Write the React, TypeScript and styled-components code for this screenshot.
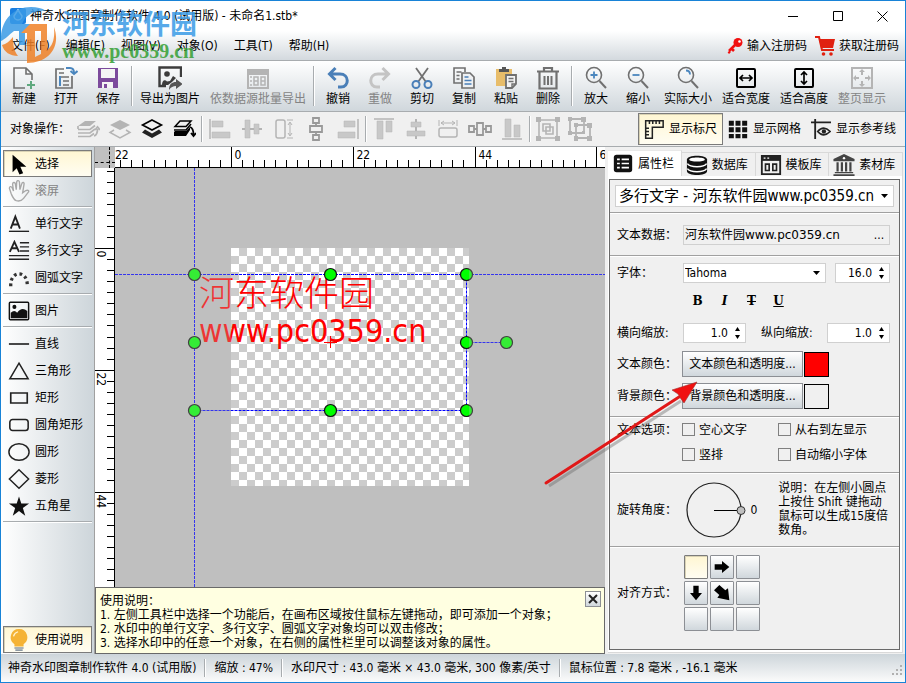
import React, { ReactNode, RefObject, useLayoutEffect, useRef, useState } from "react";
import styled, { createGlobalStyle, css } from "styled-components";

const FONT = '"DejaVu Sans Condensed", "Noto Sans CJK SC", sans-serif';

const GlobalStyle = createGlobalStyle`
  *, *::before, *::after { box-sizing: border-box; }
  body { margin: 0; background: #f0f0f0; }
  body, button, input, select { font-family: ${FONT}; font-size: 12px; line-height: 16px; color: #000; }
  button, input, select { margin: 0; }
  button { padding: 0; border: 0; background: none; white-space: nowrap; }
  svg { display: block; flex: none; }
`;

/* ---------- window frame ---------- */

const Window = styled.div`
  display: flex;
  flex-direction: column;
  min-height: 100vh;
  border: 1px solid #1883d7;
  background: #f0f0f0;
  position: relative;
  overflow: hidden;
`;

const TitleBar = styled.header`
  display: flex;
  align-items: center;
  height: 30px;
  padding-left: 9px;
  background: #fff;
`;

const TitleText = styled.span`
  flex: 1;
  padding-left: 4px;
  white-space: nowrap;
`;

const CaptionButton = styled.button`
  display: flex;
  align-items: center;
  justify-content: center;
  width: 45px;
  height: 30px;
`;

const MenuBar = styled.nav`
  display: flex;
  align-items: center;
  height: 30px;
  padding: 0 6px 0 10px;
  gap: 16px;
  background: linear-gradient(#fff, #d3d9de);
  border-bottom: 1px solid #a8acaf;
`;

const MenuSpacer = styled.span`
  flex: 1;
`;

const RegisterButton = styled.button`
  display: flex;
  align-items: center;
  gap: 4px;
  margin-left: -8px;
`;

/* ---------- toolbars ---------- */

const ToolBar = styled.div`
  display: flex;
  align-items: center;
  height: 51px;
  padding-left: 2px;
  background: linear-gradient(#fff, #d0d7dc);
  border-bottom: 1px solid #a8acaf;
`;

const ToolButton = styled.button`
  display: flex;
  flex-direction: column;
  align-items: center;
  gap: 1px;
  min-width: 42px;
  padding: 0 5px;
  &:disabled { color: #848484; }
`;

const VSeparator = styled.span<{ $h: number; $gap: number }>`
  width: 2px;
  height: ${(p) => p.$h}px;
  margin: 0 ${(p) => p.$gap}px;
  background: #a8acaf;
  border-right: 1px solid #fff;
`;

const ObjectBar = styled.div`
  display: flex;
  align-items: center;
  height: 34px;
  padding: 0 4px 0 9px;
`;

const ObjectLabel = styled.span`
  width: 62px;
  white-space: nowrap;
`;

const ObjectButton = styled.button`
  display: flex;
  justify-content: center;
  width: 32px;
`;

const ObjectSpacer = styled.span`
  flex: 1;
`;

const pressed = css`
  border: 1px solid #7b7b7b;
  background: linear-gradient(#fff6d2, #fffdf2);
  box-shadow: inset 1px 1px 0 #d9d2b4;
`;

const ViewToggle = styled.button<{ $on?: boolean }>`
  display: flex;
  align-items: center;
  gap: 5px;
  height: 32px;
  padding: 0 5px;
  ${(p) => p.$on && pressed}
`;

/* ---------- body ---------- */

const Body = styled.div`
  display: flex;
  flex: 1;
  border-top: 1px solid #a8acaf;
`;

const SideBar = styled.aside`
  display: flex;
  flex-direction: column;
  width: 94px;
  padding: 3px 2px 1px 2px;
  background: linear-gradient(90deg, #fff, #cdd5da);
  border-right: 1px solid #a0a0a0;
`;

const SideButton = styled.button<{ $on?: boolean }>`
  display: flex;
  align-items: center;
  gap: 5px;
  height: 27px;
  padding: 0 4px;
  border: 1px solid transparent;
  &:disabled { color: #848484; }
  ${(p) => p.$on && pressed}
`;

const SideSeparator = styled.span`
  height: 2px;
  margin: 2px 0;
  background: #a8acaf;
  border-bottom: 1px solid #fff;
`;

const SideSpacer = styled.span`
  flex: 1;
`;

const Workspace = styled.main`
  display: grid;
  flex: 1;
  min-width: 0;
  grid-template-columns: 20px minmax(0, 1fr);
  grid-template-rows: 21px 1fr auto;
  background: #c0c0c0;
`;

const RulerCorner = styled.div`
  position: relative;
  &::before, &::after {
    content: "";
    position: absolute;
  }
  &::before { left: 0; right: 0; bottom: 5px; border-top: 1px dashed #000; }
  &::after { top: 0; bottom: 0; right: 5px; border-left: 1px dashed #000; }
`;

const TopRulerCell = styled.div`
  height: 21px;
  background: #fff;
  border-bottom: 1px solid #000;
  overflow: hidden;
`;

const LeftRulerCell = styled.div`
  position: relative;
  background: #fff;
  border-right: 1px solid #000;
  overflow: hidden;
`;

const RulerScale = styled.svg`
  width: 100%;
  height: 100%;
`;

const LeftRulerScale = styled(RulerScale)`
  position: absolute;
  inset: 0;
`;

const Canvas = styled.div`
  position: relative;
  overflow: hidden;
`;

const Artboard = styled.div`
  position: absolute;
  left: 116px;
  top: 80px;
  width: 238px;
  height: 238px;
  background: repeating-conic-gradient(#fff 0 25%, #ccc 0 50%);
  background-size: 16px 16px;
  background-position: 8px 0;
`;

const Veil = styled.div`
  position: absolute;
  left: 116px;
  top: 80px;
  width: 238px;
  height: 238px;
  box-shadow: 0 0 0 2000px rgba(192, 192, 192, 0.28);
`;

const WatermarkText = styled.div`
  position: absolute;
  left: 84px;
  top: 103px;
  color: #f00;
  font-size: 32px;
  line-height: 40px;
  white-space: nowrap;
`;

const WatermarkHan = styled.div`
  font-family: "Noto Sans CJK SC", sans-serif;
  font-size: 35px;
  font-weight: 300;
`;

const Overlay = styled.svg`
  position: absolute;
  inset: 0;
  width: 100%;
  height: 100%;
`;

const HelpBox = styled.section`
  grid-column: 1 / -1;
  display: flex;
  justify-content: space-between;
  align-items: flex-start;
  height: 67px;
  padding: 3px;
  background: #ffffe1;
  border: 1px solid #696969;
`;

const HelpText = styled.div`
  padding: 3px 1px;
  line-height: 14px;
  white-space: nowrap;
`;

const CloseButton = styled.button`
  display: flex;
  align-items: center;
  justify-content: center;
  width: 16px;
  height: 16px;
  border: 1px solid #8c8f94;
  background: linear-gradient(#fff, #d0d7dc);
`;

/* ---------- property panel ---------- */

const Dock = styled.aside`
  display: flex;
  flex-direction: column;
  width: 300px;
  padding: 3px 2px 1px 3px;
`;

const TabRow = styled.div`
  display: flex;
  align-items: flex-end;
`;

const Tab = styled.button<{ $on?: boolean }>`
  display: flex;
  flex: 1;
  align-items: center;
  gap: 4px;
  height: 24px;
  padding-left: 4px;
  border: 1px solid #d9d9d9;
  border-width: 1px 1px 0 0;
  ${(p) => p.$on && css`height: 26px; background: #fff; border-top-color: #e8e8e8;`}
`;

const PanelOuter = styled.div`
  display: flex;
  flex: 1;
  padding: 3px 2px 2px 1px;
  background: #fff;
  border-right: 1px solid #d9d9d9;
  border-bottom: 1px solid #d9d9d9;
`;

const Panel = styled.form`
  flex: 1;
  min-width: 0;
  background: #f0f0f0;
  border: 1px solid #696969;
`;

const Section = styled.div<{ $pad: string; $last?: boolean }>`
  display: flex;
  flex-direction: column;
  padding: ${(p) => p.$pad};
  border-bottom: ${(p) => (p.$last ? "0" : "1px solid #a0a0a0")};
  box-shadow: ${(p) => (p.$last ? "none" : "0 1px 0 #fff")};
`;

const Field = styled.div<{ $h: number }>`
  display: flex;
  align-items: center;
  height: ${(p) => p.$h}px;
  padding-left: 2px;
`;

const Caption = styled.label<{ $w?: number }>`
  flex: none;
  width: ${(p) => p.$w ?? 66}px;
  white-space: nowrap;
`;

const boxed = css`
  border: 1px solid #d0d0d0;
  background: #fff;
`;

const SelectWrap = styled.div<{ $h: number }>`
  ${boxed}
  display: flex;
  align-items: center;
  flex: 1;
  min-width: 0;
  height: ${(p) => p.$h}px;
  padding-right: 5px;
`;

const Select = styled.select<{ $big?: boolean }>`
  flex: 1;
  min-width: 0;
  padding: 0 0 0 ${(p) => (p.$big ? 3 : 1)}px;
  border: 0;
  appearance: none;
  background: transparent;
  font-size: ${(p) => (p.$big ? 15 : 12)}px;
  line-height: 20px;
  white-space: nowrap;
`;

const DataBox = styled.div`
  ${boxed}
  display: flex;
  flex: 1;
  height: 20px;
  background: #f0f0f0;
`;

const DataInput = styled.input`
  flex: 1;
  min-width: 0;
  padding: 0 1px;
  border: 0;
  background: transparent;
  font-family: "DejaVu Sans", "Noto Sans CJK SC", sans-serif;
`;

const MoreButton = styled.button`
  width: 20px;
`;

const SpinBox = styled.div<{ $w: number }>`
  ${boxed}
  display: flex;
  align-items: center;
  width: ${(p) => p.$w}px;
  height: 20px;
`;

const SpinInput = styled.input`
  flex: 1;
  min-width: 0;
  padding: 0 2px 0 0;
  border: 0;
  background: transparent;
  text-align: right;
`;

const SpinButtons = styled.div`
  display: flex;
  flex-direction: column;
  align-items: center;
  gap: 4px;
  width: 15px;
`;

const FormatRow = styled.div`
  display: flex;
  align-items: center;
  height: 35px;
  padding-left: 69px;
`;

const FormatButton = styled.button`
  display: flex;
  justify-content: center;
  width: 27px;
`;

const ColorButton = styled.button`
  width: 121px;
  height: 26px;
  border: 1px solid #8c8f94;
  background: linear-gradient(#fff, #d0d7dc);
`;

const Swatch = styled.button<{ $color: string }>`
  width: 25px;
  height: 25px;
  margin-left: 1px;
  border: 1px solid #000;
  background: ${(p) => p.$color};
`;

const CheckGrid = styled.div`
  display: grid;
  grid-template-columns: 96px 1fr;
  row-gap: 9px;
  margin-left: -1px;
`;

const OptionField = styled.div`
  display: flex;
  padding-left: 2px;
`;

const CheckLabel = styled.label`
  display: flex;
  align-items: flex-start;
  gap: 4px;
  white-space: nowrap;
`;

const CheckBox = styled.input`
  appearance: none;
  width: 13px;
  height: 13px;
  margin-top: 1px;
  border: 1px solid #808080;
`;

const AngleRow = styled.div`
  display: flex;
  align-items: center;
  padding-left: 2px;
`;

const AngleNote = styled.p`
  flex: 1;
  margin: 0 0 0 21px;
  line-height: 14px;
  padding-bottom: 2px;
`;

const AlignGrid = styled.div`
  display: grid;
  grid-template-columns: repeat(3, 24px);
  gap: 2px;
  padding-left: 1px;
`;

const AlignCell = styled.button<{ $on?: boolean }>`
  display: flex;
  align-items: center;
  justify-content: center;
  height: 24px;
  border: 1px solid #8c8f94;
  border-radius: 1px;
  background: linear-gradient(#fff, #d0d7dc);
  ${(p) => p.$on && pressed}
`;

/* ---------- status bar ---------- */

const StatusBar = styled.footer`
  display: flex;
  align-items: center;
  height: 28px;
  padding-left: 7px;
  background: linear-gradient(#cdd5da, #fbfbfb);
  white-space: nowrap;
`;

const StatusSpacer = styled.span`
  flex: 1;
`;

/* ---------- site stamp and pointer arrow, floating over the window ---------- */

const Stamp = styled.div`
  position: absolute;
  left: 0;
  top: 6px;
  display: flex;
  align-items: center;
  gap: 5px;
  pointer-events: none;
  opacity: 0.85;
`;

const StampName = styled.div`
  color: #3a9be6;
  font: bold 27px/32px "Noto Sans CJK SC", sans-serif;
`;

const StampSite = styled.div`
  color: #35a035;
  font: bold 20px/24px "Liberation Serif", serif;
`;

const PointerArrow = styled.svg`
  position: absolute;
  right: 200px;
  top: 376px;
  pointer-events: none;
`;

/* ---------- icons ---------- */

const G = "#707070";
const L = "#b4b4b4";

const Icon = ({ size = 24, children }: { size?: number; children: ReactNode }) => (
  <svg width={size} height={size} viewBox="0 0 24 24" fill="none" aria-hidden="true">{children}</svg>
);

const icons: Record<string, ReactNode> = {
  new: <><path d="M13 22H2V2h12l6 6v6M14 2v6h6" stroke={G} strokeWidth="1.6" /><path d="M19 15v8M15 19h8" stroke="#5fa97f" strokeWidth="2" /></>,
  open: <><path d="M10 3H2v19h16V10" stroke={G} strokeWidth="1.7" /><path d="M5 7h5M5 11h10M5 15h2M5 19h2M9 15h6M9 19h6" stroke={G} strokeWidth="1.6" /><path d="M6 10v10" stroke="#4a86be" strokeWidth="2" /><path d="M12 2h4q4 0 4 5M16.500 5l3.500 3 3.500-3" stroke="#4a86be" strokeWidth="2" /></>,
  save: <><path d="M2 2h20v20H2z" fill="#7c4a9c" /><path d="M5 3h14v9H5z" fill="#f4f4f4" /><path d="M6 16h11v6H6z" fill="#f4f4f4" /><path d="M8 18h3v4H8z" fill="#7c4a9c" /></>,
  export: <><path d="M23 11V1.500H1.500V20H8" stroke="#3c3c3c" strokeWidth="2.400" /><circle cx="9" cy="8" r="2.800" fill="#3c3c3c" /><path d="M4 19c0-5 3-6 5-3.500l3-.5 3-5 3 2-4 4-4 3z" fill="#3c3c3c" /><path d="M11 24c0-6 3-8 7-8v-3l6.500 5-6.500 5v-3c-3 0-5 1-7 4z" fill="#555" /></>,
  batch: <><path d="M2 4h20v18H2zM2 8h20" stroke={L} strokeWidth="2" /><path d="M2 4h20v4H2z" fill={L} /><path d="M8 11h4v8H8zM8 15h4M15 11h4v8h-4zM15 15h4M4 11h2M4 15h2M4 19h2" stroke={L} strokeWidth="1.500" /></>,
  undo: <path d="M9.500 2L3.500 8l6 6M3.500 8H14c9.500 0 9.500 13 1 13h-3" stroke="#4a7fb8" strokeWidth="3" />,
  redo: <path d="M14.500 2l6 6-6 6M20.500 8H10C.5 8 .5 21 9 21h3" stroke="#c4c4c4" strokeWidth="3" />,
  cut: <><path d="M6 2l10 14M18 2L8 16" stroke={G} strokeWidth="1.800" /><circle cx="6" cy="18.500" r="3.500" stroke="#4a7fb8" strokeWidth="2" /><circle cx="18" cy="18.500" r="3.500" stroke="#4a7fb8" strokeWidth="2" /></>,
  copy: <><path d="M10 17H2V2h11v4M4.500 6h5M4.500 9.500h3M4.500 13h3" stroke={G} strokeWidth="1.600" /><path d="M10 7h8l4 4v11H10z" stroke={G} strokeWidth="1.700" fill="#eef0f2" /><path d="M12.500 11h4M12.500 14.500h7M12.500 18h7" stroke="#4a7fb8" strokeWidth="1.700" /></>,
  paste: <><path d="M2 3h16v17H2z" fill="#e8bd6a" /><path d="M5 6V3h3V1h4v2h3v3z" fill="#555" /><path d="M12 9h10v9l-4 4h-6z" fill="#f4f4f4" stroke={G} strokeWidth="1.800" /><path d="M14.500 12.500h5M14.500 15.500h5M22 18h-4v4" stroke={G} strokeWidth="1.400" /></>,
  trash: <><path d="M1 5.500h22M8 5V2h8v3M3.500 6v16.500h17V6" stroke={G} strokeWidth="2.200" /><path d="M8.500 10v9M12 10v9M15.500 10v9" stroke={G} strokeWidth="2" /></>,
  zoomIn: <><circle cx="10" cy="9" r="7.500" stroke={G} strokeWidth="1.600" /><path d="M15.500 15L22 22" stroke={G} strokeWidth="2" /><path d="M6.500 9h7M10 5.500v7" stroke="#4a86be" strokeWidth="1.800" /></>,
  zoomOut: <><circle cx="10" cy="9" r="7.500" stroke={G} strokeWidth="1.600" /><path d="M15.500 15L22 22" stroke={G} strokeWidth="2" /><path d="M6.500 9h7" stroke="#4a86be" strokeWidth="1.800" /></>,
  zoomReal: <><circle cx="10" cy="9" r="7.500" stroke={G} strokeWidth="1.600" /><path d="M15.500 15L22 22" stroke={G} strokeWidth="2" /><path d="M10 4.500q4 0 4 4" stroke="#4a86be" strokeWidth="1.800" /></>,
  fitW: <><rect x="3" y="3" width="18" height="18" rx="1" stroke="#000" strokeWidth="2" /><path d="M6 12h12M9 9l-3 3 3 3M15 9l3 3-3 3" stroke="#000" strokeWidth="1.700" /></>,
  fitH: <><rect x="3" y="3" width="18" height="18" rx="1" stroke="#000" strokeWidth="2" /><path d="M12 6v12M9 9l3-3 3 3M9 15l3 3 3-3" stroke="#000" strokeWidth="1.700" /></>,
  fitPage: <><rect x="2" y="2" width="20" height="20" stroke={L} strokeWidth="2" /><path d="M12 4v5M12 15v5M4 12h5M15 12h5" stroke={L} strokeWidth="2" /><path d="M12 3l3 3H9zM12 21l3-3H9zM3 12l3-3v6zM21 12l-3-3v6z" fill={L} /></>,
  front: <><path d="M2 9l7-5h11l-6 5z" fill={L} /><path d="M2 12.500h12l5-4M2 16h12l5-4M2 19.500h12l4-3M2 9v3" stroke={L} strokeWidth="1.700" /><path d="M18 19q3.500-1 3.500-7M19 13l2.500-3 2.500 3" stroke={L} strokeWidth="1.800" /></>,
  forward: <><path d="M12 3l10 5-10 5L2 8z" fill={L} /><path d="M6 13l-4 2.500L12 21l10-5.500L18 13" stroke={L} strokeWidth="1.500" /></>,
  backward: <><path d="M12 3l9.500 5-9.500 5-9.500-5z" stroke="#000" strokeWidth="1.600" /><path d="M5 12.500l7 4 7-4 3 3L12 21 2 15.500z" fill="#222" /></>,
  back: <><path d="M3 9.500l5-5.500h11l-5 5.500zM2 13h12l5-6" stroke="#000" strokeWidth="1.500" /><path d="M2 15l1-1h11l4-4v3l-4 6H2z" fill="#000" /><path d="M18 10q3.500 1 3.500 8M19 16l2.500 3 2.500-3" stroke="#000" strokeWidth="1.800" /></>,
  alignL: <><path d="M2 2v20" stroke={L} strokeWidth="1.500" /><path d="M4 4h11v6H4zM4 15h18v6H4z" fill="#c8c8c8" stroke={L} strokeWidth="0.500" /></>,
  alignC: <><path d="M2 12h20" stroke={L} strokeWidth="2" /><path d="M5 3h5v18H5zM14 7h5v10h-5z" fill="#c8c8c8" stroke={L} strokeWidth="0.500" /></>,
  sameH: <><rect x="4" y="3" width="9" height="18" rx="2" stroke={L} strokeWidth="1.500" /><path d="M15 3h6M15 21h6M18 6v12M16 8l2-3 2 3M16 16l2 3 2-3" stroke={L} /></>,
  spaceV: <path d="M9 1h6v5H9zM12 6v3M6 9h12v6H6zM12 15v3M9 18h6v5H9z" stroke="#999" strokeWidth="1.800" />,
  alignR: <><path d="M22 2v20" stroke={L} strokeWidth="1.500" /><path d="M8 4h11v6H8zM2 15h17v6H2z" fill="#c8c8c8" stroke={L} strokeWidth="0.500" /></>,
  alignT: <><path d="M2 2h20" stroke={L} strokeWidth="1.500" /><path d="M5 4h6v18H5zM14 4h6v11h-6z" fill="#c8c8c8" stroke={L} strokeWidth="0.500" /></>,
  alignM: <><path d="M12 2v20" stroke={L} strokeWidth="2" /><path d="M7 5h10v5H7zM3 14h18v5H3z" fill="#c8c8c8" stroke={L} strokeWidth="0.500" /></>,
  sameW: <><rect x="3" y="11" width="18" height="9" rx="2" stroke={L} strokeWidth="1.500" /><path d="M3 3v6M21 3v6M5 6h14M8 4L5 6l3 2M16 4l3 2-3 2" stroke={L} /></>,
  spaceH: <path d="M1 9h5v6H1zM6 12h3M9 6h6v12H9zM15 12h3M18 9h5v6h-5z" stroke="#999" strokeWidth="1.800" />,
  alignB: <><path d="M2 22h20" stroke={L} strokeWidth="1.500" /><path d="M5 2h6v18H5zM14 8h6v12h-6z" fill="#c8c8c8" stroke={L} strokeWidth="0.500" /></>,
  group: <><path d="M3 3h18v18H3zM7 7h7v7H7zM10 10h7v7h-7z" stroke={L} strokeWidth="1.600" /><path d="M0 0h5v5H0zM19 0h5v5h-5zM0 19h5v5H0zM19 19h5v5h-5z" fill={L} /></>,
  ungroup: <><path d="M2 2h14v14H2zM8 8h14v13H8z" stroke={L} strokeWidth="1.800" /><path d="M0 0h4v4H0zM13 0h5v5h-5zM0 14h4v4H0zM6 6h4v4H6zM19 6h5v5h-5zM6 19h4v5H6zM19 19h5v5h-5zM14 14h3v3h-3z" fill={L} /></>,
  ruler: <path d="M2 2h21v8H10v13H2zM6.500 2v4M10.500 2v4M14.500 2v4M18.500 2v4M2 11h4M2 15h4M2 19h4" stroke="#222" strokeWidth="1.800" />,
  grid: <path d="M1 2h6v6H1zM9 2h6v6H9zM17 2h6v6h-6zM1 10h6v6H1zM9 10h6v6H9zM17 10h6v6h-6zM1 18h6v5H1zM9 18h6v5H9zM17 18h6v5h-6z" fill="#111" />,
  guide: <><path d="M0 4h24M5 0v24" stroke="#222" strokeWidth="2.200" /><path d="M8 15q7-8 15 0-8 8-15 0z" stroke="#222" strokeWidth="2" /><circle cx="15.500" cy="15" r="2.600" fill="#222" /></>,
  pointer: <path d="M5 2v19l4.500-4.500 3 7 4-1.500-3-7H20z" fill="#000" />,
  hand: <path d="M9 22.500c-3-1-4-4-5.500-7.500L1.500 9c0-2 2-2.500 3-.5L6 12 5 4.500c0-2 2.500-2.500 3-.5l1 6.500L9.500 2c.5-2 3-1.500 3 .5l.5 8 2-6.500c.5-2 3-1.500 2.500.5L16 14l3.500-2.500c2.500-1 4 .5 2.500 2L17 20c-2 2.500-4.500 3.500-8 2.500z" stroke="#a8a8a8" strokeWidth="1.500" />,
  text: <><path d="M3 17L8 4l5 13M4.500 12.500h7" stroke="#222" strokeWidth="2" /><path d="M1 20h22" stroke="#222" strokeWidth="1.500" /></>,
  lines: <><path d="M2 13L7 2l5 11M3.500 9h7" stroke="#222" strokeWidth="2" /><path d="M13 3h10M13 7.500h10M13 12h10M1 17h22M1 21h22" stroke="#222" strokeWidth="1.500" /></>,
  arc: <path d="M3 21C2 3 22 3 21 21" stroke="#333" strokeWidth="3.600" strokeDasharray="3 3.200" />,
  picture: <><rect x="1.500" y="2.500" width="21" height="19" rx="1" stroke="#111" strokeWidth="1.600" /><circle cx="7" cy="7.500" r="2.200" fill="#111" /><path d="M3 20v-6q4-4 7 0 5-7 11-2v8z" fill="#111" /></>,
  line: <path d="M1 12h22" stroke="#222" strokeWidth="1.800" />,
  triangle: <path d="M12 3.500L22 20.500H2z" stroke="#222" strokeWidth="1.600" />,
  rect: <path d="M3 6.500h18v11H3z" stroke="#222" strokeWidth="1.800" />,
  round: <rect x="2" y="6" width="20" height="12" rx="3" stroke="#222" strokeWidth="1.700" />,
  circle: <ellipse cx="12" cy="12" rx="11" ry="9" stroke="#222" strokeWidth="1.600" />,
  diamond: <path d="M12 2L22.500 12 12 22 1.500 12z" stroke="#222" strokeWidth="1.600" />,
  star: <path d="M12 1.500l2.500 7.800H23l-6.800 4.800 2.600 8.400L12 17.500l-6.800 5 2.600-8.400L1 9.300h8.500z" fill="#111" />,
  bulb: <><path d="M12 0a9 9 0 0 0-5 16.500V19h10v-2.500A9 9 0 0 0 12 0z" fill="#f5b335" /><path d="M7 20h10v1.500H7zM8 22h8v2H8z" fill="#8d99a3" /><path d="M6 8q1-4 5-5" stroke="#fff3d0" strokeWidth="1.400" /></>,
  props: <><rect x="2" y="2" width="20" height="19" rx="3" fill="#111" /><path d="M5.500 7h3M5.500 11.500h3M5.500 16h3M10.500 7h8M10.500 11.500h8M10.500 16h8" stroke="#fff" strokeWidth="1.800" /></>,
  database: <><path d="M1 6C1 .5 23 .5 23 6v12.500c0 6-22 6-22 0z" fill="#111" /><path d="M3.500 6c0-3 17-3 17 0s-17 3-17 0z" fill="#fff" /><path d="M1.500 10.500c3 4.500 18 4.500 21 0M1.500 16c3 4.500 18 4.500 21 0" stroke="#fff" strokeWidth="1.600" /></>,
  template: <><path d="M2 2h20v20H2z" stroke="#222" strokeWidth="2" /><path d="M2 2h20v5.500H2z" fill="#222" /><path d="M6 11h4v7H6zM14 11h4v7h-4z" stroke="#222" strokeWidth="1.800" /><path d="M4 4.500h2M8 4.500h2" stroke="#fff" strokeWidth="1.500" /></>,
  bank: <><path d="M12 0l11.500 5.500V8H.5V5.500zM2 19.500h20V21H2zM.5 22h23v2H.5z" fill="#444" /><path d="M5 9v10M9.700 9v10M14.300 9v10M19 9v10" stroke="#444" strokeWidth="2.400" /><circle cx="12" cy="4.500" r="1.300" fill="#fff" /></>,
  arrowR: <path d="M1 8h11V3l11 9-11 9v-5H1z" fill="#000" />,
  arrowD: <path d="M8 1v11H3l9 11 9-11h-5V1z" fill="#000" />,
  arrowDR: <path d="M8 0L0 8l8 7-3 4 18 4-2-18-4 3z" fill="#000" />,
};

type Item = { icon: string; label: string; off?: boolean };

const toolGroups: Item[][] = [
  [{ icon: "new", label: "新建" }, { icon: "open", label: "打开" }, { icon: "save", label: "保存" }],
  [{ icon: "export", label: "导出为图片" }, { icon: "batch", label: "依数据源批量导出", off: true }],
  [
    { icon: "undo", label: "撤销" }, { icon: "redo", label: "重做", off: true }, { icon: "cut", label: "剪切" },
    { icon: "copy", label: "复制" }, { icon: "paste", label: "粘贴" }, { icon: "trash", label: "删除" },
  ],
  [
    { icon: "zoomIn", label: "放大" }, { icon: "zoomOut", label: "缩小" }, { icon: "zoomReal", label: "实际大小" },
    { icon: "fitW", label: "适合宽度" }, { icon: "fitH", label: "适合高度" }, { icon: "fitPage", label: "整页显示", off: true },
  ],
];

const objectGroups: Item[][] = [
  [{ icon: "front", label: "置顶", off: true }, { icon: "forward", label: "上移", off: true }, { icon: "backward", label: "下移" }, { icon: "back", label: "置底" }],
  [{ icon: "alignL", label: "左对齐", off: true }, { icon: "alignC", label: "垂直居中", off: true }, { icon: "sameH", label: "等高", off: true }, { icon: "spaceV", label: "垂直等距", off: true }, { icon: "alignR", label: "右对齐", off: true }],
  [{ icon: "alignT", label: "顶对齐", off: true }, { icon: "alignM", label: "水平居中", off: true }, { icon: "sameW", label: "等宽", off: true }, { icon: "spaceH", label: "水平等距", off: true }, { icon: "alignB", label: "底对齐", off: true }],
  [{ icon: "group", label: "组合", off: true }, { icon: "ungroup", label: "取消组合", off: true }],
];

const sideGroups: Item[][] = [
  [{ icon: "pointer", label: "选择" }, { icon: "hand", label: "滚屏", off: true }],
  [{ icon: "text", label: "单行文字" }, { icon: "lines", label: "多行文字" }, { icon: "arc", label: "圆弧文字" }],
  [{ icon: "picture", label: "图片" }],
  [
    { icon: "line", label: "直线" }, { icon: "triangle", label: "三角形" }, { icon: "rect", label: "矩形" },
    { icon: "round", label: "圆角矩形" }, { icon: "circle", label: "圆形" }, { icon: "diamond", label: "菱形" }, { icon: "star", label: "五角星" },
  ],
  [],
];

const tabs: Item[] = [
  { icon: "props", label: "属性栏" }, { icon: "database", label: "数据库" },
  { icon: "template", label: "模板库" }, { icon: "bank", label: "素材库" },
];

const MM = 238 / 43;

/* Tick marks run every 2 mm and carry a number every 22 mm. */
const ticks = (origin: number, length: number) => {
  const step = 2 * MM;
  const first = Math.ceil(-origin / step);
  const count = Math.max(0, Math.floor((length - origin) / step) - first + 1);
  return Array.from({ length: count }, (_, i) => ({ n: first + i, at: Math.round(origin + (first + i) * step) + 0.5 }));
};

function useLength(ref: RefObject<HTMLDivElement | null>, side: "clientWidth" | "clientHeight") {
  const [length, setLength] = useState(0);
  useLayoutEffect(() => {
    const el = ref.current;
    if (!el) return;
    const read = () => setLength(el[side]);
    read();
    const observer = new ResizeObserver(read);
    observer.observe(el);
    return () => observer.disconnect();
  }, [ref, side]);
  return length;
}

const handles = [[79, 106], [215, 106], [351, 106], [79, 174], [351, 174], [391, 174], [79, 242], [215, 242], [351, 242]];

function Separated({ groups, sep, render }: { groups: Item[][]; sep: ReactNode; render: (t: Item) => ReactNode }) {
  return (
    <>
      {groups.map((g, i) => (
        <React.Fragment key={i}>
          {i > 0 && sep}
          {g.map(render)}
        </React.Fragment>
      ))}
    </>
  );
}

function TopRuler() {
  const ref = useRef<HTMLDivElement>(null);
  const width = useLength(ref, "clientWidth");
  return (
    <TopRulerCell ref={ref}>
      <RulerScale>
        <text x="0" y="12" fontSize="12">22</text>
        {ticks(116, width).map(({ n, at }) => (
          <React.Fragment key={n}>
            <path d={`M${at} ${n % 11 ? 13 : 0}V21`} stroke="#000" />
            {n % 11 === 0 && <text x={at + 3} y="12" fontSize="12">{n * 2}</text>}
          </React.Fragment>
        ))}
      </RulerScale>
    </TopRulerCell>
  );
}

function LeftRuler() {
  const ref = useRef<HTMLDivElement>(null);
  const height = useLength(ref, "clientHeight");
  return (
    <LeftRulerCell ref={ref}>
      <LeftRulerScale>
        {ticks(80, height).map(({ n, at }) => (
          <React.Fragment key={n}>
            <path d={`M${n % 11 ? 12 : 0} ${at}H20`} stroke="#000" />
            {n % 11 === 0 && <text transform={`translate(2 ${at + 2}) rotate(90)`} fontSize="12">{n * 2}</text>}
          </React.Fragment>
        ))}
      </LeftRulerScale>
    </LeftRulerCell>
  );
}

function DrawingArea() {
  return (
    <Canvas>
      <Artboard />
      <WatermarkText>
        <WatermarkHan>河东软件园</WatermarkHan>
        www.pc0359.cn
      </WatermarkText>
      <Overlay>
        <g stroke="#00f" strokeDasharray="3 1" fill="none">
          <path d="M79.500 0V2000M0 106.500H3000M79.500 242.500H351.500M351.500 106.500V242.500M351.500 174.500H391.500" />
        </g>
        <path d="M215.500 168v12M209 174.500h13" stroke="#f00" />
        {handles.map(([x, y]) => (
          <circle key={`${x}-${y}`} cx={x + 0.5} cy={y + 0.5} r="6" fill="#0f0" stroke="#111" strokeWidth="1.200" />
        ))}
      </Overlay>
      <Veil />
    </Canvas>
  );
}

function Spin({ id, value, width, label }: { id: string; value: string; width: number; label: string }) {
  return (
    <SpinBox $w={width}>
      <SpinInput id={id} defaultValue={value} aria-label={label} />
      <SpinButtons>
        <button type="button" aria-label={`${label} +`}><svg width="5" height="4"><path d="M0 4l2.500-4L5 4z" /></svg></button>
        <button type="button" aria-label={`${label} -`}><svg width="5" height="4"><path d="M0 0l2.500 4L5 0z" /></svg></button>
      </SpinButtons>
    </SpinBox>
  );
}

const DropArrow = () => <svg width="7" height="4" aria-hidden="true"><path d="M0 0h7L3.500 4z" /></svg>;

const Glyph = styled.span<{ $kind: "b" | "i" | "s" | "u" }>`
  font: bold 12px/16px "DejaVu Serif", serif;
  font-style: ${(p) => (p.$kind === "i" ? "italic" : "normal")};
  text-decoration: ${(p) => (p.$kind === "s" ? "line-through" : p.$kind === "u" ? "underline" : "none")};
`;

const GapField = styled.div`
  flex: none;
  width: 9px;
`;

const ScaleGap = styled.div`
  flex: 1;
`;

const FieldEnd = styled.div`
  flex: none;
  width: 4px;
`;

function PropertyPanel() {
  return (
    <Dock>
      <TabRow role="tablist">
        {tabs.map((t, i) => (
          <Tab key={t.label} type="button" role="tab" aria-selected={i === 0} $on={i === 0}>
            <Icon size={22}>{icons[t.icon]}</Icon>{t.label}
          </Tab>
        ))}
      </TabRow>
      <PanelOuter>
        <Panel>
          <Section $pad="5px 5px 5px">
            <SelectWrap $h={24}>
              <Select $big aria-label="当前对象"><option>多行文字 - 河东软件园www.pc0359.cn</option></Select>
              <DropArrow />
            </SelectWrap>
          </Section>
          <Section $pad="12px 5px 10px">
            <Field $h={20}>
              <Caption htmlFor="data">文本数据：</Caption>
              <DataBox>
                <DataInput id="data" defaultValue="河东软件园www.pc0359.cn" />
                <MoreButton type="button">...</MoreButton>
              </DataBox>
              <FieldEnd />
            </Field>
          </Section>
          <Section $pad="7px 5px 4px">
            <Field $h={20}>
              <Caption htmlFor="font">字体：</Caption>
              <SelectWrap $h={20}>
                <Select id="font"><option>Tahoma</option></Select>
                <DropArrow />
              </SelectWrap>
              <GapField />
              <Spin id="size" value="16.0" width={55} label="字号" />
              <FieldEnd />
            </Field>
            <FormatRow>
              <FormatButton type="button"><Glyph $kind="b">B</Glyph></FormatButton>
              <FormatButton type="button"><Glyph $kind="i">I</Glyph></FormatButton>
              <FormatButton type="button"><Glyph $kind="s">T</Glyph></FormatButton>
              <FormatButton type="button"><Glyph $kind="u">U</Glyph></FormatButton>
            </FormatRow>
            <Field $h={30}>
              <Caption htmlFor="sx">横向缩放:</Caption>
              <Spin id="sx" value="1.0" width={63} label="横向缩放" />
              <ScaleGap />
              <Caption htmlFor="sy">纵向缩放:</Caption>
              <Spin id="sy" value="1.0" width={63} label="纵向缩放" />
              <FieldEnd />
            </Field>
            <Field $h={32}>
              <Caption $w={65} htmlFor="fg">文本颜色：</Caption>
              <ColorButton id="fg" type="button">文本颜色和透明度...</ColorButton>
              <Swatch type="button" $color="#f00" aria-label="文本颜色" />
            </Field>
            <Field $h={32}>
              <Caption $w={65} htmlFor="bg">背景颜色：</Caption>
              <ColorButton id="bg" type="button">背景颜色和透明度...</ColorButton>
              <Swatch type="button" $color="#f0f0f0" aria-label="背景颜色" />
            </Field>
          </Section>
          <Section $pad="5px 5px 9px">
            <OptionField>
              <Caption as="span">文本选项：</Caption>
              <CheckGrid>
                {["空心文字", "从右到左显示", "竖排", "自动缩小字体"].map((t) => (
                  <CheckLabel key={t}><CheckBox type="checkbox" />{t}</CheckLabel>
                ))}
              </CheckGrid>
            </OptionField>
          </Section>
          <Section $pad="8px 8px 7px 5px">
            <AngleRow>
              <Caption as="span">旋转角度：</Caption>
              <svg width="64" height="58" aria-hidden="true">
                <circle cx="31" cy="29" r="27" fill="none" stroke="#222" strokeWidth="1.200" />
                <path d="M31 29.500h24" stroke="#000" />
                <circle cx="58" cy="29.500" r="4" fill="#c0c0c0" stroke="#333" />
              </svg>
              <span>&nbsp;0</span>
              <AngleNote>说明：在左侧小圆点上按住 Shift 键拖动鼠标可以生成15度倍数角。</AngleNote>
            </AngleRow>
          </Section>
          <Section $pad="8px 5px 0" $last>
            <Field $h={76}>
              <Caption as="span">对齐方式：</Caption>
              <AlignGrid>
                {["", "arrowR", "", "arrowD", "arrowDR", "", "", "", ""].map((k, i) => (
                  <AlignCell key={i} type="button" $on={i === 0} aria-label={`对齐 ${i + 1}`}>
                    {k && <Icon size={16}>{icons[k]}</Icon>}
                  </AlignCell>
                ))}
              </AlignGrid>
            </Field>
          </Section>
        </Panel>
      </PanelOuter>
    </Dock>
  );
}

export default function App() {
  return (
    <Window>
      <GlobalStyle />
      <TitleBar>
        <svg width="16" height="16" aria-hidden="true">
          <rect width="16" height="16" rx="2" fill="#1a7fe0" />
          <path d="M8 2l4 6a4 4 0 1 1-8 0z" fill="none" stroke="#fff" strokeWidth="1.500" />
        </svg>
        <TitleText>神奇水印图章制作软件 4.0 (试用版) - 未命名1.stb*</TitleText>
        <CaptionButton aria-label="最小化"><svg width="10" height="10"><path d="M0 5.500h10" stroke="#000" /></svg></CaptionButton>
        <CaptionButton aria-label="最大化"><svg width="10" height="10"><path d="M.5.500h9v9h-9z" fill="none" stroke="#000" /></svg></CaptionButton>
        <CaptionButton aria-label="关闭"><svg width="11" height="11"><path d="M.5.500l10 10M10.500.500l-10 10" stroke="#000" /></svg></CaptionButton>
      </TitleBar>
      <MenuBar>
        {["文件(F)", "编辑(E)", "视图(V)", "对象(O)", "工具(T)", "帮助(H)"].map((m) => (
          <button key={m} type="button">{m}</button>
        ))}
        <MenuSpacer />
        <RegisterButton type="button">
          <svg width="16" height="16" aria-hidden="true">
            <circle cx="11" cy="4.500" r="4.500" fill="#f01010" />
            <circle cx="12.500" cy="3.500" r="1.300" fill="#fff" />
            <path d="M9 6l-7 7M4.500 10.500l2.500 2.500M1.500 13.500l1.500 1.500" stroke="#f01010" strokeWidth="2.600" />
          </svg>
          输入注册码
        </RegisterButton>
        <RegisterButton type="button">
          <svg width="20" height="20" aria-hidden="true">
            <path d="M0 1h4l3 13h12" fill="none" stroke="#e02010" strokeWidth="2" />
            <path d="M4 3h16l-2 9H6z" fill="#e02010" />
            <circle cx="8.500" cy="18" r="1.800" fill="#e02010" />
            <circle cx="16" cy="18" r="1.800" fill="#e02010" />
          </svg>
          获取注册码
        </RegisterButton>
      </MenuBar>
      <ToolBar>
        <Separated
          groups={toolGroups}
          sep={<VSeparator $h={40} $gap={2} />}
          render={(t) => (
            <ToolButton key={t.label} type="button" disabled={t.off}>
              <Icon>{icons[t.icon]}</Icon>{t.label}
            </ToolButton>
          )}
        />
      </ToolBar>
      <ObjectBar>
        <ObjectLabel>对象操作：</ObjectLabel>
        <Separated
          groups={objectGroups}
          sep={<VSeparator $h={26} $gap={1} />}
          render={(t) => (
            <ObjectButton key={t.icon} type="button" disabled={t.off} aria-label={t.label}>
              <Icon>{icons[t.icon]}</Icon>
            </ObjectButton>
          )}
        />
        <ObjectSpacer />
        <ViewToggle type="button" $on><Icon size={20}>{icons.ruler}</Icon>显示标尺</ViewToggle>
        <ViewToggle type="button"><Icon size={20}>{icons.grid}</Icon>显示网格</ViewToggle>
        <ViewToggle type="button"><Icon size={20}>{icons.guide}</Icon>显示参考线</ViewToggle>
      </ObjectBar>
      <Body>
        <SideBar>
          <Separated
            groups={sideGroups}
            sep={<SideSeparator />}
            render={(t) => (
              <SideButton key={t.label} type="button" disabled={t.off} $on={t.label === "选择"}>
                <Icon size={22}>{icons[t.icon]}</Icon>{t.label}
              </SideButton>
            )}
          />
          <SideSpacer />
          <SideButton type="button" $on><Icon size={22}>{icons.bulb}</Icon>使用说明</SideButton>
        </SideBar>
        <Workspace>
          <RulerCorner />
          <TopRuler />
          <LeftRuler />
          <DrawingArea />
          <HelpBox>
            <HelpText>
              使用说明：<br />
              1. 左侧工具栏中选择一个功能后，在画布区域按住鼠标左键拖动，即可添加一个对象；<br />
              2. 水印中的单行文字、多行文字、圆弧文字对象均可以双击修改；<br />
              3. 选择水印中的任意一个对象，在右侧的属性栏里可以调整该对象的属性。
            </HelpText>
            <CloseButton type="button" aria-label="关闭说明">
              <svg width="10" height="10"><path d="M1 1l8 8M9 1L1 9" stroke="#222" strokeWidth="2" /></svg>
            </CloseButton>
          </HelpBox>
        </Workspace>
        <PropertyPanel />
      </Body>
      <StatusBar>
        <span>神奇水印图章制作软件 4.0 (试用版)</span>
        <VSeparator $h={18} $gap={8} />
        <span>缩放 : 47%</span>
        <VSeparator $h={18} $gap={8} />
        <span>水印尺寸 : 43.0 毫米 × 43.0 毫米, 300 像素/英寸</span>
        <VSeparator $h={18} $gap={8} />
        <span>鼠标位置 : 7.8 毫米 , -16.1 毫米</span>
        <StatusSpacer />
        <svg width="14" height="20" aria-hidden="true">
          <path d="M9 7h2v2H9zM5 11h2v2H5zM9 11h2v2H9zM1 15h2v2H1zM5 15h2v2H5zM9 15h2v2H9z" fill="#b0b0b0" />
        </svg>
      </StatusBar>
      <Stamp>
        <svg width="56" height="56" viewBox="0 0 56 56" aria-hidden="true">
          <path d="M0 34C-1 14 12 0 30 0c6 0 11 1 15 4-12-1-20 4-24 13h8v7h-5v14h-6V24h-5C8 28 3 33 0 34z" fill="#3a9be6" />
          <path d="M1 38c4-1 8-4 11-8 0 8 1 14 5 19C9 49 3 45 1 38z" fill="#f08228" />
          <path d="M26 56V26h-6l9-9h17v26C52 39 54 31 53 20c7 19-4 36-27 36zM34 24v26l6-3V24z" fill="#f08228" fillRule="evenodd" />
        </svg>
        <div>
          <StampName>河东软件园</StampName>
          <StampSite>www.pc0359.cn</StampSite>
        </div>
      </Stamp>
      <PointerArrow width="165" height="115" viewBox="0 0 165 115" aria-hidden="true">
        <path d="M9 109L141 24" stroke="#666" strokeWidth="3" opacity="0.4" />
        <path d="M6 106L139 20" stroke="#e01818" strokeWidth="3" strokeLinecap="round" />
        <path d="M157 5L132 13l6 4 3 5 3 4z" fill="#f01010" stroke="#a03030" strokeWidth="0.600" />
      </PointerArrow>
    </Window>
  );
}
